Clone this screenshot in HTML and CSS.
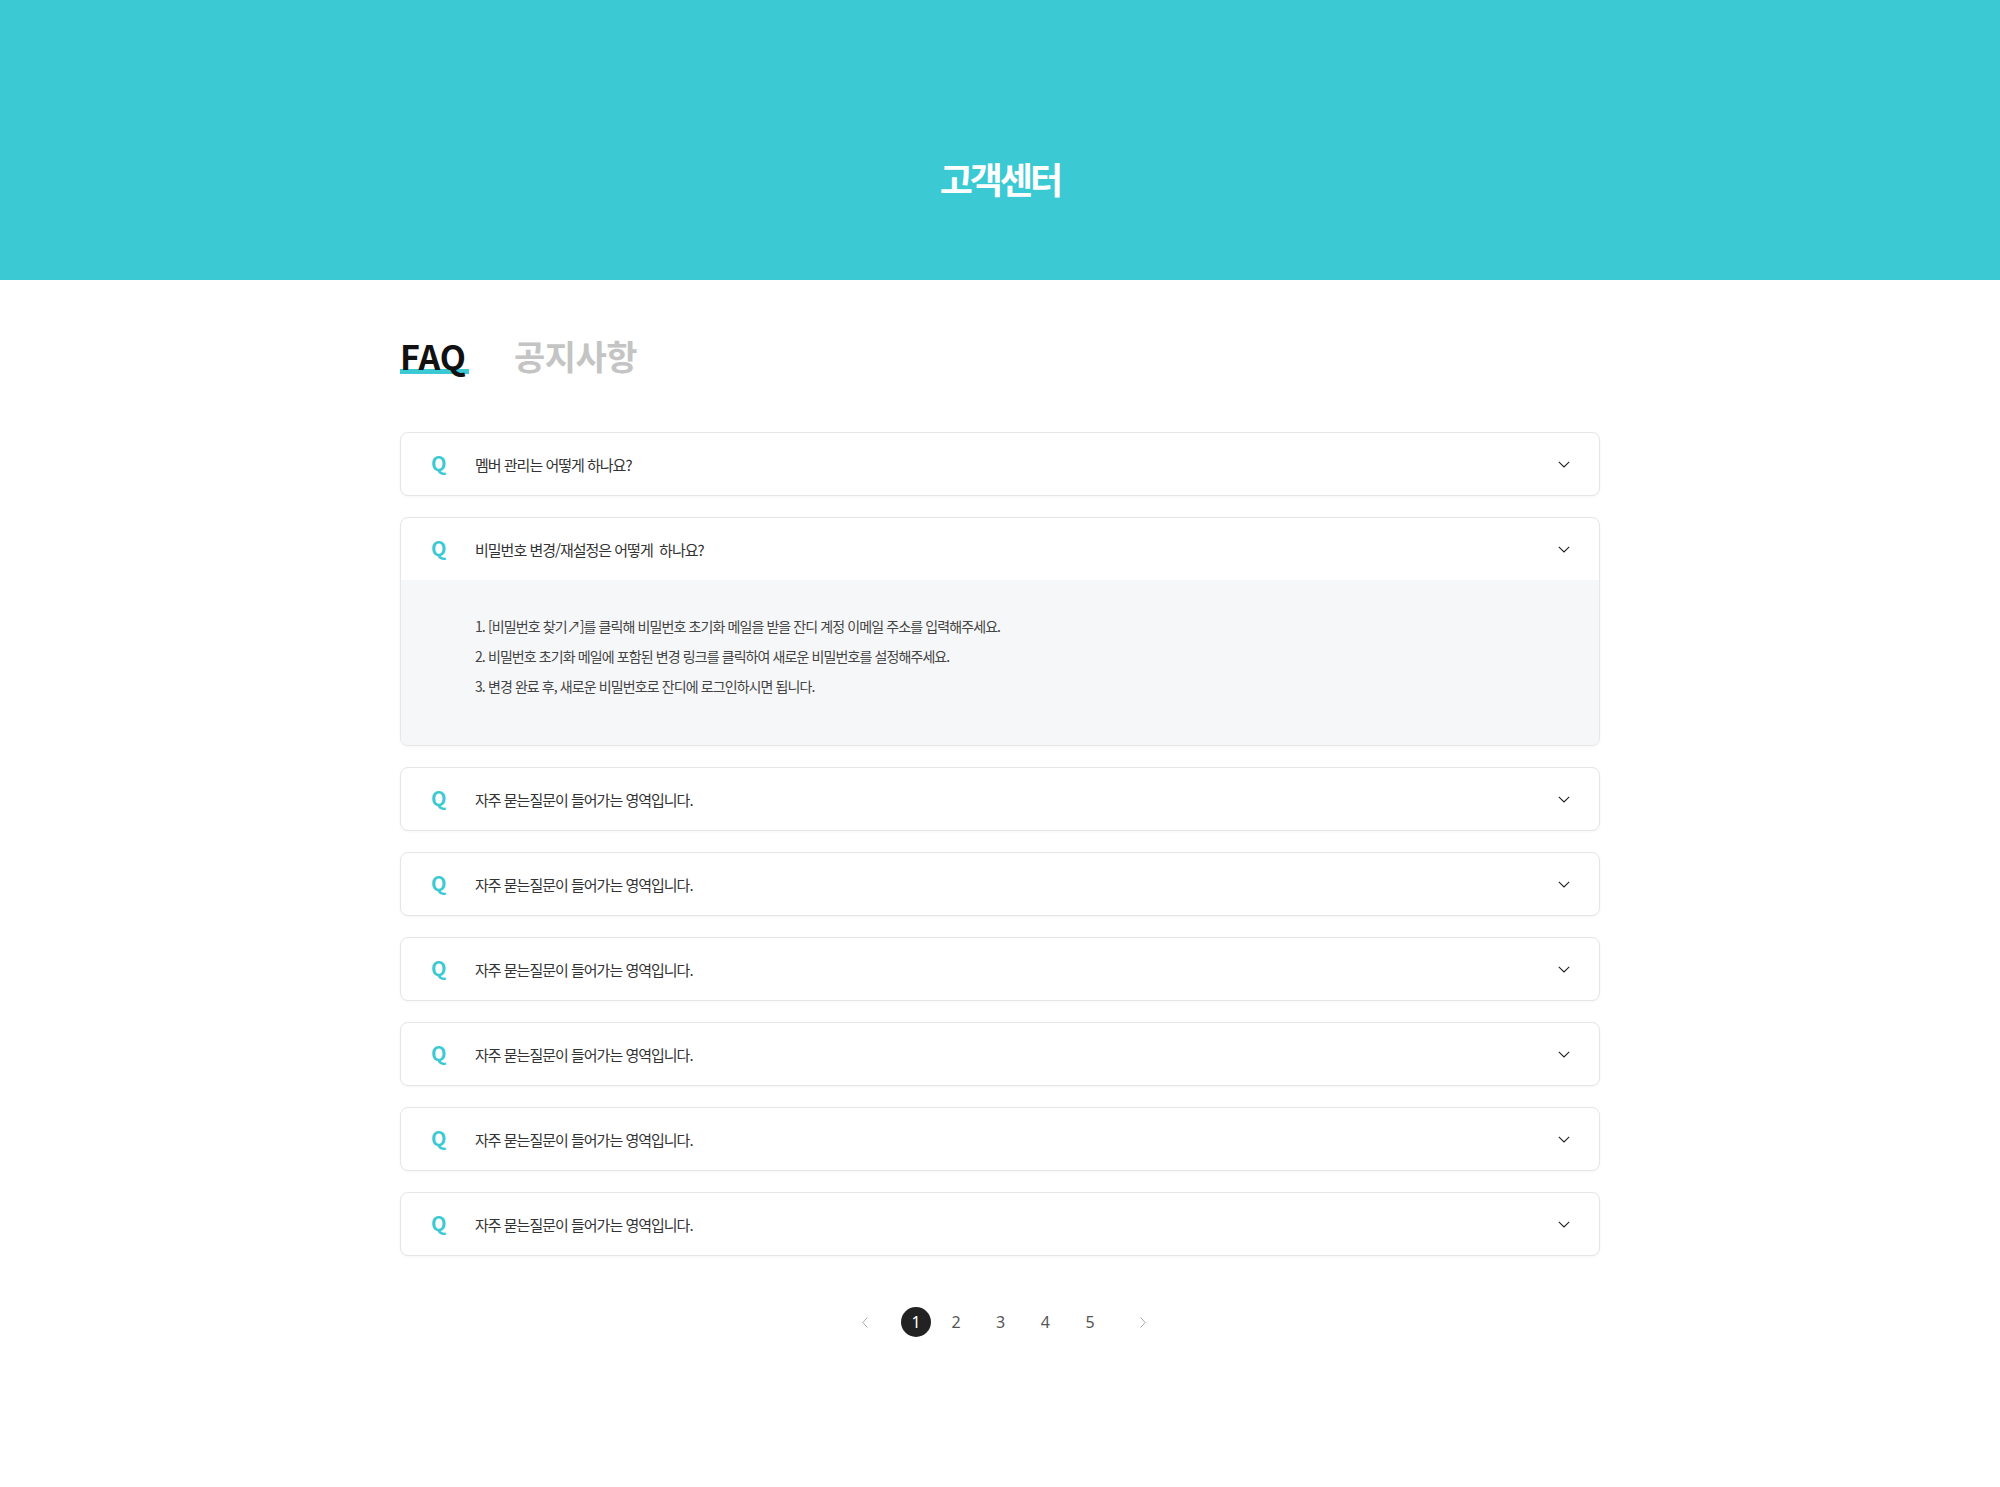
FILE: index.html
```html
<!DOCTYPE html>
<html lang="ko">
<head>
<meta charset="utf-8">
<title>고객센터</title>
<link rel="stylesheet" href="styles.css">
</head>
<body>
<header class="hero">
  <h1 class="hero-title">고객센터</h1>
</header>
<main class="container">
  <nav class="tabs">
    <a class="tab tab-active">FAQ</a>
    <a class="tab tab-notice">공지사항</a>
  </nav>
  <ul class="faq-list">
    <li class="faq-item">
      <div class="faq-head"><span class="faq-q">Q</span><span class="faq-title">멤버 관리는 어떻게 하나요?</span><svg class="chev" width="12" height="7" viewBox="0 0 12 7"><path d="M0.8 0.8 L6 6 L11.2 0.8" fill="none" stroke="#222" stroke-width="1.1"/></svg></div>
    </li>
    <li class="faq-item">
      <div class="faq-head"><span class="faq-q">Q</span><span class="faq-title">비밀번호 변경/재설정은 어떻게&nbsp; 하나요?</span><svg class="chev" width="12" height="7" viewBox="0 0 12 7"><path d="M0.8 0.8 L6 6 L11.2 0.8" fill="none" stroke="#222" stroke-width="1.1"/></svg></div>
      <div class="faq-answer">
        <p>1. [비밀번호 찾기↗]를 클릭해 비밀번호 초기화 메일을 받을 잔디 계정 이메일 주소를 입력해주세요.</p>
        <p>2. 비밀번호 초기화 메일에 포함된 변경 링크를 클릭하여 새로운 비밀번호를 설정해주세요.</p>
        <p>3. 변경 완료 후, 새로운 비밀번호로 잔디에 로그인하시면 됩니다.</p>
      </div>
    </li>
    <li class="faq-item">
      <div class="faq-head"><span class="faq-q">Q</span><span class="faq-title">자주 묻는질문이 들어가는 영역입니다.</span><svg class="chev" width="12" height="7" viewBox="0 0 12 7"><path d="M0.8 0.8 L6 6 L11.2 0.8" fill="none" stroke="#222" stroke-width="1.1"/></svg></div>
    </li>
    <li class="faq-item">
      <div class="faq-head"><span class="faq-q">Q</span><span class="faq-title">자주 묻는질문이 들어가는 영역입니다.</span><svg class="chev" width="12" height="7" viewBox="0 0 12 7"><path d="M0.8 0.8 L6 6 L11.2 0.8" fill="none" stroke="#222" stroke-width="1.1"/></svg></div>
    </li>
    <li class="faq-item">
      <div class="faq-head"><span class="faq-q">Q</span><span class="faq-title">자주 묻는질문이 들어가는 영역입니다.</span><svg class="chev" width="12" height="7" viewBox="0 0 12 7"><path d="M0.8 0.8 L6 6 L11.2 0.8" fill="none" stroke="#222" stroke-width="1.1"/></svg></div>
    </li>
    <li class="faq-item">
      <div class="faq-head"><span class="faq-q">Q</span><span class="faq-title">자주 묻는질문이 들어가는 영역입니다.</span><svg class="chev" width="12" height="7" viewBox="0 0 12 7"><path d="M0.8 0.8 L6 6 L11.2 0.8" fill="none" stroke="#222" stroke-width="1.1"/></svg></div>
    </li>
    <li class="faq-item">
      <div class="faq-head"><span class="faq-q">Q</span><span class="faq-title">자주 묻는질문이 들어가는 영역입니다.</span><svg class="chev" width="12" height="7" viewBox="0 0 12 7"><path d="M0.8 0.8 L6 6 L11.2 0.8" fill="none" stroke="#222" stroke-width="1.1"/></svg></div>
    </li>
    <li class="faq-item">
      <div class="faq-head"><span class="faq-q">Q</span><span class="faq-title">자주 묻는질문이 들어가는 영역입니다.</span><svg class="chev" width="12" height="7" viewBox="0 0 12 7"><path d="M0.8 0.8 L6 6 L11.2 0.8" fill="none" stroke="#222" stroke-width="1.1"/></svg></div>
    </li>
  </ul>
  <nav class="pager">
    <a class="pg-arrow pg-prev"><svg width="6" height="11" viewBox="0 0 6 11"><path d="M5.3 0.6 L0.8 5.5 L5.3 10.4" fill="none" stroke="#aaa" stroke-width="1"/></svg></a>
    <a class="pg-num pg-current">1</a>
    <a class="pg-num">2</a>
    <a class="pg-num">3</a>
    <a class="pg-num">4</a>
    <a class="pg-num">5</a>
    <a class="pg-arrow pg-next"><svg width="6" height="11" viewBox="0 0 6 11"><path d="M0.7 0.6 L5.2 5.5 L0.7 10.4" fill="none" stroke="#aaa" stroke-width="1"/></svg></a>
  </nav>
</main>
</body>
</html>
```

FILE: styles.css
```css
* { box-sizing: border-box; }
html, body { margin: 0; padding: 0; }
body {
  background: #fff;
  font-family: "Noto Sans CJK KR", "Noto Sans", sans-serif;
  color: #222;
}
.hero {
  height: 280px;
  padding-top: 76px;
  background: #3bc9d3;
  display: flex;
  align-items: center;
  justify-content: center;
}
.hero-title {
  margin: 0;
  color: #fff;
  font-size: 36px;
  font-weight: 700;
  letter-spacing: -3px;
  line-height: 1;
}
.container {
  width: 1200px;
  margin: 0 auto;
  padding-bottom: 120px;
}
.tabs {
  display: flex;
  align-items: baseline;
  gap: 45px;
  margin-top: 59px;
  line-height: 1;
}
.tab {
  font-size: 34px;
  font-weight: 700;
  color: #c4c4c4;
}
.tab-notice { letter-spacing: -0.5px; }
.tab-active {
  color: #111;
  letter-spacing: 0;
  padding: 0 3px 1px 0;
  background: linear-gradient(#3bc9d3, #3bc9d3) no-repeat;
  background-size: 100% 5px;
  background-position: 0 100%;
}
.faq-list {
  list-style: none;
  margin: 58px 0 0;
  padding: 0;
  display: flex;
  flex-direction: column;
  gap: 21px;
}
.faq-item {
  border: 1px solid #e6e6e6;
  border-radius: 8px;
  overflow: hidden;
  box-shadow: 0 1px 3px rgba(0,0,0,0.04);
  background: #fff;
}
.faq-head {
  height: 62px;
  display: flex;
  align-items: center;
  padding: 0 29px 0 30px;
}
.faq-q {
  width: 44px;
  flex: none;
  color: #3bc9d3;
  font-size: 20px;
  font-weight: 700;
  line-height: 1;
  margin-top: -2px;
}
.faq-title {
  flex: 1;
  font-size: 15px;
  color: #333;
  letter-spacing: -1px;
}
.chev { flex: none; display: block; }
.faq-answer {
  background: #f6f7f9;
  padding: 31px 0 44px 74px;
}
.faq-answer p {
  margin: 0;
  font-size: 14px;
  line-height: 30px;
  letter-spacing: -0.9px;
  color: #444;
}
.pager {
  margin-top: 51px;
  padding-left: 8px;
  display: flex;
  justify-content: center;
  align-items: center;
  gap: 14.7px;
}
.pg-num {
  width: 30px;
  height: 30px;
  border-radius: 50%;
  display: flex;
  align-items: center;
  justify-content: center;
  font-size: 16px;
  color: #555;
  font-family: "Noto Sans", sans-serif;
}
.pg-current {
  background: #222;
  color: #fff;
  margin-right: -4.7px;
}
.pg-arrow {
  width: 30px;
  height: 30px;
  display: flex;
  align-items: center;
  justify-content: center;
}
.pg-prev { margin-right: 6.3px; }
.pg-next { margin-left: 8.3px; }
```
